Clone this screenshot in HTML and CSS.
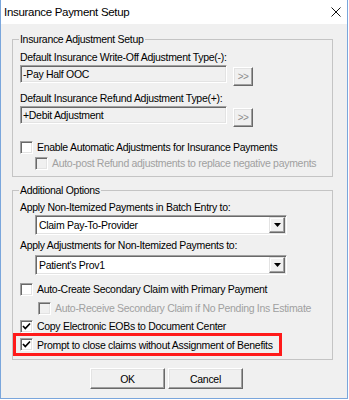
FILE: index.html
```html
<!DOCTYPE html>
<html>
<head>
<meta charset="utf-8">
<link rel="stylesheet" href="styles.css">
</head>
<body>
<div class="window">
  <div class="titlebar">
    <span class="title">Insurance Payment Setup</span>
    <svg class="close" width="10" height="10" viewBox="0 0 10 10"><path d="M0.5 0.5 L9.5 9.5 M9.5 0.5 L0.5 9.5" stroke="#111" stroke-width="1" fill="none"/></svg>
  </div>
  <div class="content">
    <div class="group g1">
      <div class="legend">Insurance Adjustment Setup</div>
      <div class="label lab-a">Default Insurance Write-Off Adjustment Type(-):</div>
      <div class="field-row">
        <div class="textbox">-Pay Half OOC</div>
        <div class="btn small">&gt;&gt;</div>
      </div>
      <div class="label lab-b">Default Insurance Refund Adjustment Type(+):</div>
      <div class="field-row">
        <div class="textbox">+Debit Adjustment</div>
        <div class="btn small">&gt;&gt;</div>
      </div>
      <div class="check-row cr-enable"><span class="cb"></span><span>Enable Automatic Adjustments for Insurance Payments</span></div>
      <div class="check-row disabled ind1"><span class="cb"></span><span>Auto-post Refund adjustments to replace negative payments</span></div>
    </div>

    <div class="group g2">
      <div class="legend">Additional Options</div>
      <div class="label lab-c">Apply Non-Itemized Payments in Batch Entry to:</div>
      <div class="combo combo-a"><span class="combo-text">Claim Pay-To-Provider</span><span class="combo-btn"><svg width="7" height="4" viewBox="0 0 7 4"><path d="M0 0 H7 L3.5 4 Z" fill="#000"/></svg></span></div>
      <div class="label lab-d">Apply Adjustments for Non-Itemized Payments to:</div>
      <div class="combo combo-b"><span class="combo-text">Patient's Prov1</span><span class="combo-btn"><svg width="7" height="4" viewBox="0 0 7 4"><path d="M0 0 H7 L3.5 4 Z" fill="#000"/></svg></span></div>
      <div class="check-row cr-auto"><span class="cb"></span><span>Auto-Create Secondary Claim with Primary Payment</span></div>
      <div class="check-row disabled ind2 cr-recv"><span class="cb"></span><span>Auto-Receive Secondary Claim if No Pending Ins Estimate</span></div>
      <div class="check-row cr-copy"><span class="cb checked"><svg width="11" height="11" viewBox="0 0 11 11"><path d="M2 5 L4.3 7.5 L9 2.5" stroke="#000" stroke-width="1.7" fill="none"/></svg></span><span>Copy Electronic EOBs to Document Center</span></div>
      <div class="highlight">
        <div class="check-row"><span class="cb checked"><svg width="11" height="11" viewBox="0 0 11 11"><path d="M2 5 L4.3 7.5 L9 2.5" stroke="#000" stroke-width="1.7" fill="none"/></svg></span><span>Prompt to close claims without Assignment of Benefits</span></div>
      </div>
    </div>

    <div class="buttons">
      <div class="btn big">OK</div>
      <div class="btn big">Cancel</div>
    </div>
  </div>
</div>
</body>
</html>
```

FILE: styles.css
```css
body {
  margin: 0;
  background: #ffffff;
  font-family: "Liberation Sans", Arial, sans-serif;
  font-size: 10.5px;
  letter-spacing: -0.3px;
  color: #000;
}

.window {
  width: 348px;
  height: 399px;
  box-sizing: border-box;
  border-left: 1px solid #7aa6dc;
  border-right: 1px solid #7aa6dc;
  border-bottom: 1px solid #7aa6dc;
  display: flex;
  flex-direction: column;
  background: #f0f0f0;
}

.titlebar {
  height: 24px;
  flex: none;
  background: #ffffff;
  display: flex;
  align-items: center;
  justify-content: space-between;
  padding: 0 6px 0 3px;
}

.title {
  font-size: 11.5px;
  letter-spacing: -0.3px;
  color: #000;
}

.close {
  display: block;
}

.content {
  flex: 1;
  display: flex;
  flex-direction: column;
}

.group {
  width: 321px;
  box-sizing: border-box;
  margin: 15px 0 0 11px;
  border: 1px solid #c4c4c4;
  padding: 0 0 5px 7px;
}

.g2 {
  margin-top: 13px;
  padding-bottom: 3px;
}

.legend {
  width: max-content;
  height: 14px;
  line-height: 14px;
  margin: -8px 0 0 -1px;
  padding: 0 1px;
  background: #f0f0f0;
}

.label {
  height: 14px;
  line-height: 14px;
  white-space: nowrap;
}

.lab-a { margin-top: 4px; }
.lab-b { margin-top: 5px; }
.lab-c { margin-top: 3px; }
.lab-d { margin-top: 3px; }

.field-row {
  display: flex;
  align-items: flex-start;
  gap: 6px;
  margin-top: 1px;
}

.textbox {
  width: 207px;
  height: 18px;
  box-sizing: border-box;
  background: #f0f0f0;
  border: 1px solid;
  border-color: #a0a0a0 #ffffff #ffffff #a0a0a0;
  box-shadow: inset 1px 1px 0 #696969, inset -1px -1px 0 #e3e3e3;
  padding-left: 2px;
  line-height: 16px;
  white-space: nowrap;
}

.btn {
  box-sizing: border-box;
  background: #f0f0f0;
  border: 1px solid;
  border-color: #ffffff #696969 #696969 #ffffff;
  box-shadow: inset -1px -1px 0 #a0a0a0, inset 1px 1px 0 #e3e3e3;
  display: flex;
  align-items: center;
  justify-content: center;
}

.btn.small {
  width: 20px;
  height: 19px;
  margin-top: 2px;
  color: #8d8d8d;
  font-size: 10px;
  letter-spacing: -0.5px;
}

.check-row {
  display: flex;
  align-items: center;
  gap: 4px;
  height: 16px;
  white-space: nowrap;
}

.cb {
  width: 13px;
  height: 13px;
  box-sizing: border-box;
  flex: none;
  background: #ffffff;
  border: 1px solid;
  border-color: #a0a0a0 #ffffff #ffffff #a0a0a0;
  box-shadow: inset 1px 1px 0 #696969, inset -1px -1px 0 #e3e3e3;
  display: flex;
  align-items: center;
  justify-content: center;
}

.cb svg {
  display: block;
}

.disabled {
  color: #a0a0a0;
}

.disabled .cb {
  background: #f0f0f0;
}

.cr-enable { margin-top: 12px; }
.ind1 { margin-left: 15px; }
.ind2 { margin-left: 18px; }
.cr-auto { margin-top: 6px; }
.cr-recv { margin-top: 3px; }
.cr-copy { margin-top: 2px; }

.combo {
  width: 252px;
  height: 20px;
  box-sizing: border-box;
  margin-left: 15px;
  background: #ffffff;
  border: 1px solid;
  border-color: #a0a0a0 #ffffff #ffffff #a0a0a0;
  box-shadow: inset 1px 1px 0 #696969, inset -1px -1px 0 #e3e3e3;
  padding: 1px 1px 1px 3px;
  display: flex;
  align-items: center;
  justify-content: space-between;
}

.combo-a { margin-top: 1px; }
.combo-b { margin-top: 3px; }

.combo-text {
  white-space: nowrap;
}

.combo-btn {
  width: 16px;
  height: 16px;
  box-sizing: border-box;
  background: #f0f0f0;
  border: 1px solid;
  border-color: #e3e3e3 #696969 #696969 #e3e3e3;
  box-shadow: inset -1px -1px 0 #a0a0a0, inset 1px 1px 0 #ffffff;
  display: flex;
  align-items: center;
  justify-content: center;
}

.combo-btn svg {
  display: block;
}

.highlight {
  width: 269px;
  box-sizing: border-box;
  margin: -1px 0 0 -7px;
  border: 3px solid #ff1a1a;
  padding: 0 0 0 4px;
  height: 23px;
  display: flex;
  align-items: center;
}

.buttons {
  display: flex;
  gap: 3px;
  margin: 8px 0 0 89px;
}

.btn.big {
  width: 75px;
  height: 21px;
}
```
